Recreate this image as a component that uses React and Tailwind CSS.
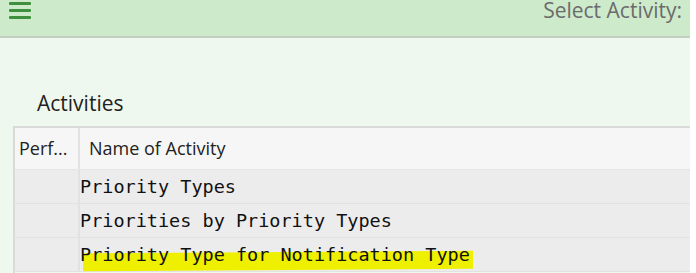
export default function App() {
  const rows = ["Priority Types", "Priorities by Priority Types", "Priority Type for Notification Type"];
  return (
    <div className="w-[696px] h-[273px] bg-white overflow-hidden flex">
      <div className="w-[690px] h-full bg-[#eef8ee] flex flex-col">
        <div className="h-[36px] bg-[#cdeacb] border-b-2 border-[#c4cfc4] flex items-start justify-between pl-[9px] pr-[8px] box-content">
          <div className="flex flex-col gap-[4px] pt-[2px]">
            <div className="w-[22px] h-[3px] bg-[#3f8f3f] rounded-[1px]" />
            <div className="w-[22px] h-[3px] bg-[#3f8f3f] rounded-[1px]" />
            <div className="w-[22px] h-[3px] bg-[#3f8f3f] rounded-[1px]" />
          </div>
          <div className="text-[21px] leading-[18px] pt-[1px] text-[#6b6b6b] font-['Open_Sans',sans-serif]">Select Activity:</div>
        </div>
        <div className="pl-[37px] pt-[52px] h-[88px] text-[21px] leading-[26px] text-[#222] font-['Open_Sans',sans-serif]">Activities</div>
        <div className="ml-[13px] border-l-2 border-t-2 border-[#dadada] flex-1 flex flex-col">
          <div className="h-[42px] bg-[#f6f6f6] flex border-b border-[#e6e6e6] text-[18px] text-[#222] font-['Open_Sans',sans-serif]">
            <div className="w-[65px] border-r-2 border-[#e2e2e2] flex items-center pl-[4px]">Perf...</div>
            <div className="flex items-center pl-[9px]">Name of Activity</div>
          </div>
          {rows.map((r, i) => (
            <div key={i} className="h-[34px] bg-[#ececec] flex border-b border-[#e2e2e2] text-[18.5px] text-[#111] font-['DejaVu_Sans_Mono',monospace]">
              <div className="w-[65px] border-r-2 border-[#e2e2e2]" />
              <div className="flex items-center relative">
                {i === 2 && <div className="absolute left-[3px] top-[14px] h-[18px] w-[390px] bg-[#eef000] -skew-y-[0.4deg]" />}
                <span className="relative">{r}</span>
              </div>
            </div>
          ))}
        </div>
      </div>
    </div>
  );
}
